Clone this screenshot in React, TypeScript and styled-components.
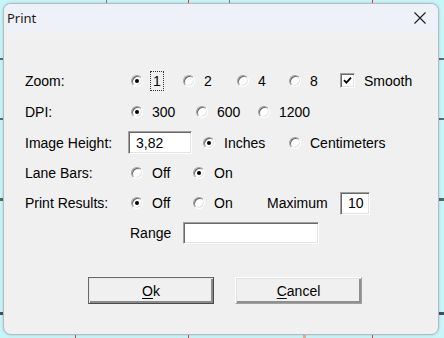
import React from 'react'
import styled, { createGlobalStyle } from 'styled-components'

const Global = createGlobalStyle`
  html, body {
    margin: 0;
    padding: 0;
  }
  body {
    width: 444px;
    height: 338px;
    overflow: hidden;
    font-family: "Liberation Sans", Arial, sans-serif;
    background:
      linear-gradient(#d94040, #d94040) 188px 0 / 1px 100% no-repeat,
      linear-gradient(#d94040, #d94040) 372px 0 / 1px 100% no-repeat,
      linear-gradient(#d94040, #d94040) 75px 300px / 1px 100% no-repeat,
      linear-gradient(#7a7a7a, #7a7a7a) 106px 0 / 1px 20px no-repeat,
      linear-gradient(#7a7a7a, #7a7a7a) 229px 0 / 1px 20px no-repeat,
      linear-gradient(#e0b090, #e0b090) 303px 300px / 3px 100% no-repeat,
      linear-gradient(#5b6b7e, #5b6b7e) 0 58px / 100% 2px no-repeat,
      linear-gradient(#5b6b7e, #5b6b7e) 0 118px / 100% 2px no-repeat,
      linear-gradient(#4f6a5e, #4f6a5e) 0 198px / 100% 3px no-repeat,
      linear-gradient(#3f4f66, #3f4f66) 0 312px / 100% 3px no-repeat,
      #c8f5f8;
  }
`

const Page = styled.div`
  padding: 3px 0 0 3px;
`

const Dialog = styled.div`
  width: 436px;
  height: 332px;
  box-sizing: border-box;
  border: 1px solid #b4bcc2;
  border-radius: 8px;
  overflow: hidden;
  background: #f0f0f0;
  box-shadow: 0 0 3px rgba(0, 0, 0, 0.18);
  display: flex;
  flex-direction: column;
`

const TitleBar = styled.div`
  height: 28px;
  flex: none;
  display: flex;
  align-items: center;
  justify-content: space-between;
  padding: 0 12px 1px 3px;
  background: #eef2f8;
  font-family: "Noto Sans", "Open Sans", sans-serif;
  font-size: 13px;
  color: #1b1b1b;
`

const Content = styled.div`
  padding: 32px 0 0 21px;
  font-size: 14px;
  color: #000;
`

const Row = styled.div<{ $cols: string; $h: number }>`
  display: grid;
  grid-template-columns: ${(p) => p.$cols};
  align-items: center;
  height: ${(p) => p.$h}px;
  white-space: nowrap;
`

const Option = styled.label`
  display: flex;
  align-items: center;
  gap: 9px;
`

const RadioCircle = styled.span<{ $on?: boolean }>`
  position: relative;
  flex: none;
  width: 12px;
  height: 12px;
  box-sizing: border-box;
  border-radius: 50%;
  border: 1px solid;
  border-color: #a0a0a0 #ffffff #ffffff #a0a0a0;
  background: #fff;
  box-shadow: inset 1px 1px 0 #696969, inset -1px -1px 0 #e3e3e3;
  &::after {
    content: '';
    display: ${(p) => (p.$on ? 'block' : 'none')};
    position: absolute;
    left: 3px;
    top: 3px;
    width: 4px;
    height: 4px;
    border-radius: 50%;
    background: #000;
  }
`

const Focus = styled.span`
  outline: 1px dotted #333;
  outline-offset: 1px;
  padding: 0 1px;
`

const CheckBox = styled.span`
  flex: none;
  width: 15px;
  height: 15px;
  box-sizing: border-box;
  border: 1px solid;
  border-color: #a0a0a0 #ffffff #ffffff #a0a0a0;
  box-shadow: inset 1px 1px 0 #696969, inset -1px -1px 0 #e3e3e3;
  background: #fff;
  display: flex;
  align-items: center;
  justify-content: center;
`

const Field = styled.div<{ $w: number; $h: number }>`
  width: ${(p) => p.$w}px;
  height: ${(p) => p.$h}px;
  box-sizing: border-box;
  border: 1px solid;
  border-color: #a0a0a0 #ffffff #ffffff #a0a0a0;
  box-shadow: inset 1px 1px 0 #696969, inset -1px -1px 0 #e3e3e3;
  background: #fff;
  padding-left: 7px;
  display: flex;
  align-items: center;
`

const Buttons = styled.div`
  display: flex;
  gap: 21px;
  padding-left: 63px;
  margin-top: 29px;
`

const Button = styled.div<{ $default?: boolean }>`
  width: ${(p) => (p.$default ? 126 : 127)}px;
  height: 27px;
  box-sizing: border-box;
  display: flex;
  align-items: center;
  justify-content: center;
  background: #f0f0f0;
  border: 1px solid;
  border-color: ${(p) =>
    p.$default ? '#6a6a6a #4a4a4a #4a4a4a #6a6a6a' : '#ffffff #a0a0a0 #a0a0a0 #ffffff'};
  box-shadow: ${(p) =>
    p.$default
      ? 'inset 1px 1px 0 #e8e8e8, inset -2px -2px 0 #8a8a8a'
      : 'inset 1px 1px 0 #e3e3e3, inset -2px -2px 0 #8f8f8f'};
  font-size: 14px;
  u {
    text-decoration-thickness: 1px;
    text-underline-offset: 2px;
  }
`

const Radio = ({ on, children }: { on?: boolean; children: React.ReactNode }) => (
  <Option>
    <RadioCircle $on={on} />
    <span>{children}</span>
  </Option>
)

export default function App() {
  return (
    <>
      <Global />
      <Page>
        <Dialog>
          <TitleBar>
            <span>Print</span>
            <svg width="12" height="12" viewBox="0 0 12 12">
              <path d="M0.5 0.5 L11.5 11.5 M11.5 0.5 L0.5 11.5" stroke="#1b1b1b" strokeWidth="1.1" />
            </svg>
          </TitleBar>
          <Content>
            <Row $cols="106px 52px 54px 52px 51px auto" $h={31}>
              <span>Zoom:</span>
              <Radio on>
                <Focus>1</Focus>
              </Radio>
              <Radio>2</Radio>
              <Radio>4</Radio>
              <Radio>8</Radio>
              <Option>
                <CheckBox>
                  <svg width="9" height="9" viewBox="0 0 9 9">
                    <path d="M1 4.2 L3.4 6.6 L8 1.6" fill="none" stroke="#000" strokeWidth="1.8" />
                  </svg>
                </CheckBox>
                <span>Smooth</span>
              </Option>
            </Row>
            <Row $cols="106px 65px 62px auto" $h={31}>
              <span>DPI:</span>
              <Radio on>300</Radio>
              <Radio>600</Radio>
              <Radio>1200</Radio>
            </Row>
            <Row $cols="103px 75px 86px auto" $h={31}>
              <span>Image Height:</span>
              <Field $w={64} $h={23}>3,82</Field>
              <Radio on>Inches</Radio>
              <Radio>Centimeters</Radio>
            </Row>
            <Row $cols="106px 62px auto" $h={30}>
              <span>Lane Bars:</span>
              <Radio>Off</Radio>
              <Radio on>On</Radio>
            </Row>
            <Row $cols="106px 62px 74px 73px auto" $h={30}>
              <span>Print Results:</span>
              <Radio on>Off</Radio>
              <Radio>On</Radio>
              <span>Maximum</span>
              <Field $w={30} $h={23}>10</Field>
            </Row>
            <Row $cols="105px 53px auto" $h={30}>
              <span />
              <span>Range</span>
              <Field $w={136} $h={22} />
            </Row>
            <Buttons>
              <Button $default>
                <span>
                  <u>O</u>k
                </span>
              </Button>
              <Button>
                <span>
                  <u>C</u>ancel
                </span>
              </Button>
            </Buttons>
          </Content>
        </Dialog>
      </Page>
    </>
  )
}
